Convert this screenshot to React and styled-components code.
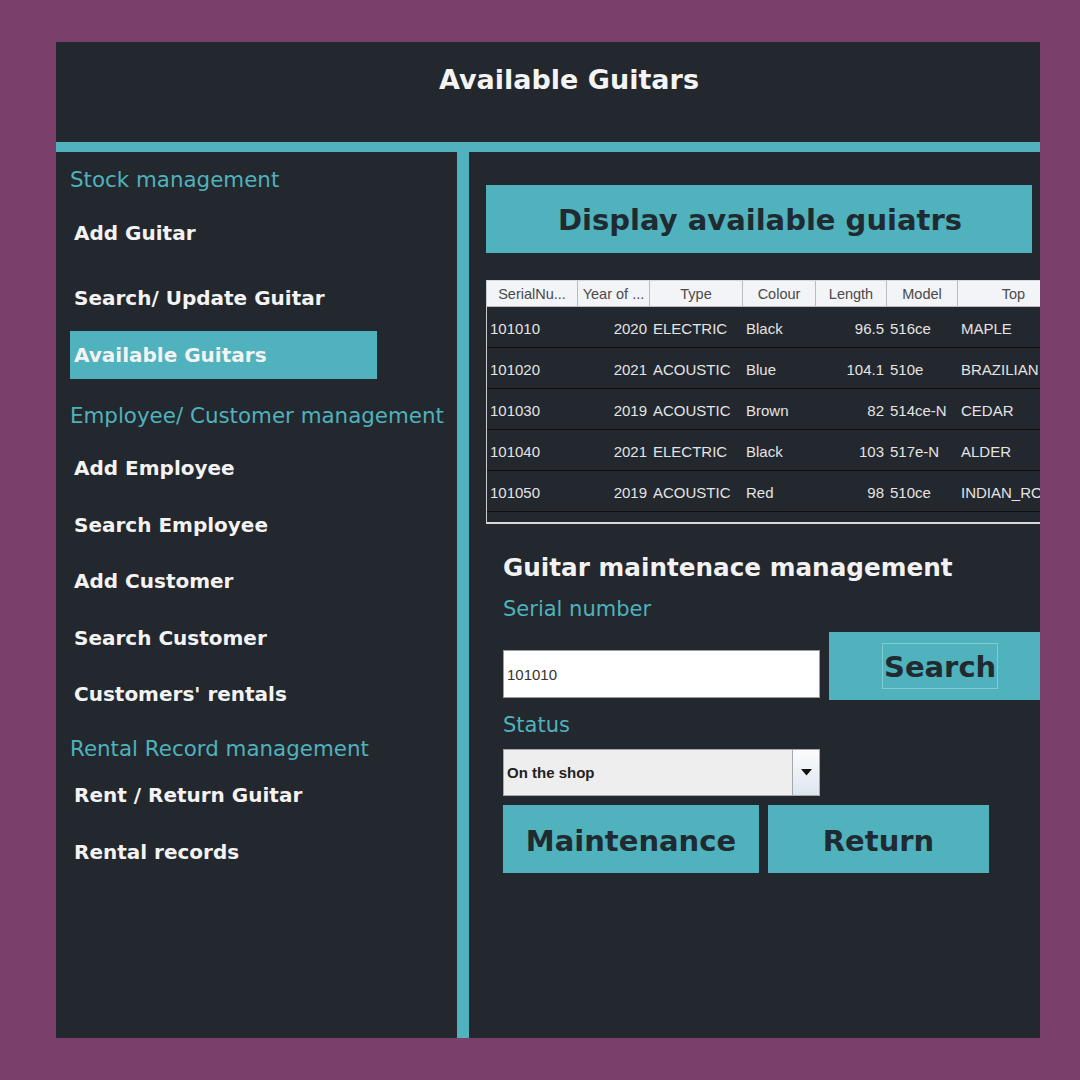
import styled, { createGlobalStyle } from 'styled-components'

const TEAL = '#4fb2bc'
const DARK = '#23272e'
const INK = '#1f2a31'

const GlobalStyle = createGlobalStyle`
  html, body {
    margin: 0;
    padding: 0;
    background: #7b3f6b;
  }
  * { box-sizing: border-box; }
`

const columns = [
  { key: 'serial', label: 'SerialNu...', width: 91, align: 'left' },
  { key: 'year', label: 'Year of ...', width: 72, align: 'right' },
  { key: 'type', label: 'Type', width: 93, align: 'left' },
  { key: 'colour', label: 'Colour', width: 73, align: 'left' },
  { key: 'length', label: 'Length', width: 71, align: 'right' },
  { key: 'model', label: 'Model', width: 71, align: 'left' },
  { key: 'top', label: 'Top', width: 112, align: 'left' },
]

const guitars = [
  { serial: '101010', year: '2020', type: 'ELECTRIC', colour: 'Black', length: '96.5', model: '516ce', top: 'MAPLE' },
  { serial: '101020', year: '2021', type: 'ACOUSTIC', colour: 'Blue', length: '104.1', model: '510e', top: 'BRAZILIAN' },
  { serial: '101030', year: '2019', type: 'ACOUSTIC', colour: 'Brown', length: '82', model: '514ce-N', top: 'CEDAR' },
  { serial: '101040', year: '2021', type: 'ELECTRIC', colour: 'Black', length: '103', model: '517e-N', top: 'ALDER' },
  { serial: '101050', year: '2019', type: 'ACOUSTIC', colour: 'Red', length: '98', model: '510ce', top: 'INDIAN_ROSEWOOD' },
]

function App() {
  return (
    <Page>
      <GlobalStyle />
      <Frame>
        <Header>Available Guitars</Header>
        <Body>
          <Sidebar>
            <SectionLabel $top={4}>Stock management</SectionLabel>
            <NavItem $top={5}>Add Guitar</NavItem>
            <NavItem $top={17}>Search/ Update Guitar</NavItem>
            <NavItem $top={9} $active>Available Guitars</NavItem>
            <SectionLabel $top={13}>Employee/ Customer management</SectionLabel>
            <NavItem $top={4}>Add Employee</NavItem>
            <NavItem $top={9}>Search Employee</NavItem>
            <NavItem $top={8}>Add Customer</NavItem>
            <NavItem $top={9}>Search Customer</NavItem>
            <NavItem $top={8}>Customers' rentals</NavItem>
            <SectionLabel $top={7}>Rental Record management</SectionLabel>
            <NavItem $top={-2}>Rent / Return Guitar</NavItem>
            <NavItem $top={9}>Rental records</NavItem>
          </Sidebar>

          <Main>
            <DisplayButton>Display available guiatrs</DisplayButton>

            <TableBox>
              <TableGrid>
                <HeadRow>
                  {columns.map(c => (
                    <HeadCell key={c.key} $w={c.width}>{c.label}</HeadCell>
                  ))}
                </HeadRow>
                {guitars.map(g => (
                  <Row key={g.serial}>
                    {columns.map(c => (
                      <Cell key={c.key} $w={c.width} $align={c.align}>{g[c.key]}</Cell>
                    ))}
                  </Row>
                ))}
              </TableGrid>
            </TableBox>

            <Form>
              <FormTitle>Guitar maintenace management</FormTitle>
              <FieldLabel>Serial number</FieldLabel>
              <SearchRow>
                <TextInput defaultValue="101010" />
                <SearchButton><FocusRing>Search</FocusRing></SearchButton>
              </SearchRow>
              <FieldLabel>Status</FieldLabel>
              <Select>
                <SelectValue>On the shop</SelectValue>
                <ArrowBox>
                  <svg width="11" height="7" viewBox="0 0 11 7">
                    <path d="M0 0 H11 L5.5 6.5 Z" fill="#111" />
                  </svg>
                </ArrowBox>
              </Select>
              <ActionRow>
                <ActionButton $w={256}>Maintenance</ActionButton>
                <ActionButton $w={221}>Return</ActionButton>
              </ActionRow>
            </Form>
          </Main>
        </Body>
      </Frame>
    </Page>
  )
}

export default App

const Page = styled.div`
  width: 1080px;
  height: 1080px;
  padding: 42px 40px 42px 56px;
`

const Frame = styled.div`
  width: 984px;
  height: 996px;
  background: ${TEAL};
  display: flex;
  flex-direction: column;
`

const Header = styled.div`
  height: 100px;
  background: ${DARK};
  color: #f4f4f4;
  font-family: "DejaVu Sans", Verdana, sans-serif;
  font-weight: bold;
  font-size: 27px;
  display: flex;
  justify-content: center;
  padding-top: 22px;
  padding-left: 42px;
  margin-bottom: 10px;
`

const Body = styled.div`
  flex: 1;
  display: grid;
  grid-template-columns: 401px 571px;
  column-gap: 12px;
  min-height: 0;
`

const Sidebar = styled.div`
  background: ${DARK};
  padding: 0 0 0 14px;
  display: flex;
  flex-direction: column;
  align-items: flex-start;
  font-family: "DejaVu Sans", Verdana, sans-serif;
`

const SectionLabel = styled.div`
  margin-top: ${p => p.$top}px;
  height: 48px;
  line-height: 48px;
  color: ${TEAL};
  font-size: 21.4px;
  white-space: nowrap;
`

const NavItem = styled.div`
  margin-top: ${p => p.$top}px;
  height: 48px;
  line-height: 48px;
  width: 307px;
  padding-left: 4px;
  color: #f3f3f3;
  font-size: 20px;
  font-weight: bold;
  white-space: nowrap;
  background: ${p => (p.$active ? TEAL : 'transparent')};
`

const Main = styled.div`
  background: ${DARK};
  padding: 33px 0 0 17px;
  overflow: hidden;
  display: flex;
  flex-direction: column;
  font-family: "DejaVu Sans", Verdana, sans-serif;
`

const DisplayButton = styled.div`
  width: 546px;
  height: 68px;
  background: ${TEAL};
  color: ${INK};
  font-size: 29px;
  font-weight: bold;
  display: flex;
  align-items: center;
  justify-content: center;
  padding: 2px 0 0 2px;
`

const TableBox = styled.div`
  margin-top: 27px;
  width: 620px;
  height: 244px;
  border-left: 1px solid #c9ccd0;
  border-bottom: 2px solid #d6d8db;
  border-top: 1px solid #d6d8db;
`

const TableGrid = styled.div`
  display: flex;
  flex-direction: column;
  font-family: "Liberation Sans", Arial, sans-serif;
`

const HeadRow = styled.div`
  display: flex;
  height: 26px;
  background: #f2f4f7;
  border-bottom: 1px solid #b8bcc2;
`

const HeadCell = styled.div`
  flex: 0 0 ${p => p.$w}px;
  border-right: 1px solid #b8bcc2;
  color: #4a4a4a;
  font-size: 14.5px;
  line-height: 26px;
  text-align: center;
  white-space: nowrap;
  overflow: hidden;
`

const Row = styled.div`
  display: flex;
  height: 41px;
  background: #23272e;
  border-bottom: 1px solid #0e1013;
`

const Cell = styled.div`
  flex: 0 0 ${p => p.$w}px;
  padding: 3px 3px 0;
  color: #e4e4e4;
  font-size: 15px;
  line-height: 38px;
  text-align: ${p => p.$align};
  white-space: nowrap;
  overflow: hidden;
`

const Form = styled.div`
  padding-left: 17px;
  display: flex;
  flex-direction: column;
  align-items: flex-start;
`

const FormTitle = styled.div`
  margin-top: 28px;
  height: 32px;
  line-height: 32px;
  color: #f2f2f2;
  font-size: 24.7px;
  font-weight: bold;
  white-space: nowrap;
`

const FieldLabel = styled.div`
  margin-top: 10px;
  height: 30px;
  line-height: 30px;
  color: ${TEAL};
  font-size: 21px;
`

const SearchRow = styled.div`
  margin-top: 8px;
  display: flex;
  align-items: flex-end;
  gap: 9px;
`

const TextInput = styled.input`
  width: 317px;
  height: 48px;
  margin-bottom: 2px;
  border: 1px solid #9a9ea4;
  background: #fff;
  padding: 0 3px;
  font-family: "Liberation Sans", Arial, sans-serif;
  font-size: 15px;
  color: #333;
  outline: none;
`

const SearchButton = styled.div`
  width: 230px;
  height: 68px;
  background: ${TEAL};
  display: flex;
  align-items: center;
  padding-left: 53px;
`

const FocusRing = styled.span`
  display: inline-block;
  height: 46px;
  line-height: 46px;
  padding: 0 1px;
  border: 1px solid rgba(150, 215, 222, 0.7);
  color: ${INK};
  font-size: 29px;
  font-weight: bold;
`

const Select = styled.div`
  margin-top: 9px;
  width: 317px;
  height: 47px;
  display: flex;
  border: 1px solid #a4a8ae;
  background: #eeeeee;
  font-family: "Liberation Sans", Arial, sans-serif;
`

const SelectValue = styled.div`
  flex: 1;
  padding-left: 3px;
  line-height: 45px;
  font-size: 15px;
  font-weight: bold;
  color: #222;
`

const ArrowBox = styled.div`
  width: 27px;
  border-left: 1px solid #a4a8ae;
  background: linear-gradient(to bottom, #fbfcfd, #dde6ee);
  display: flex;
  align-items: center;
  justify-content: center;
`

const ActionRow = styled.div`
  margin-top: 9px;
  display: flex;
  gap: 9px;
`

const ActionButton = styled.div`
  width: ${p => p.$w}px;
  height: 68px;
  background: ${TEAL};
  color: ${INK};
  font-size: 29px;
  font-weight: bold;
  display: flex;
  align-items: center;
  justify-content: center;
  padding-top: 3px;
`
